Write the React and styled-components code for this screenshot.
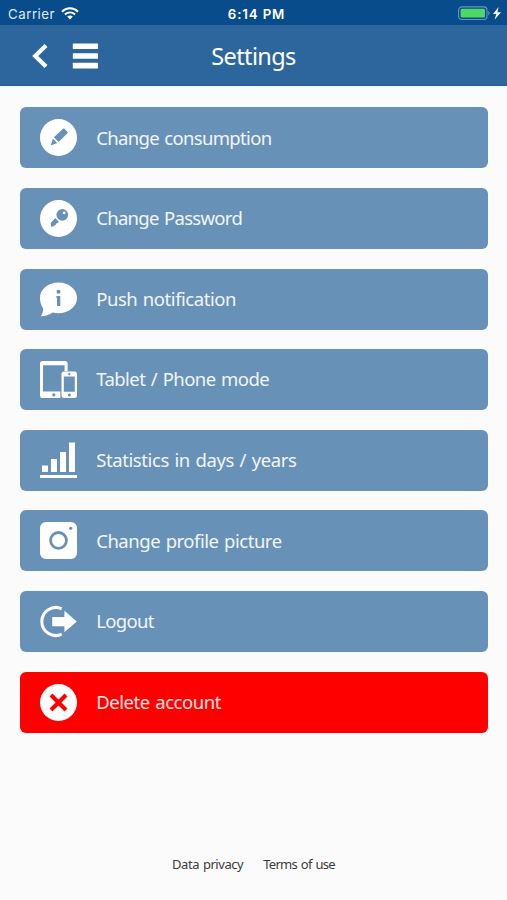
import styled, { createGlobalStyle } from "styled-components";

const GlobalStyle = createGlobalStyle`
  * {
    box-sizing: border-box;
  }
  body {
    margin: 0;
    background-color: #fbfbfb;
    font-family: "Noto Sans", "Open Sans", sans-serif;
  }
`;

const PageStyled = styled.div`
  display: flex;
  flex-direction: column;
  width: 100%;
  height: 900px;
  overflow: hidden;
`;

const StatusBarStyled = styled.div`
  display: grid;
  grid-template-columns: 1fr auto 1fr;
  align-items: center;
  height: 25px;
  padding: 2px 5px 0 8px;
  background-color: #084c8b;
  color: #fff;
  font-family: Inter, sans-serif;
  font-size: 13.3px;
`;

const CarrierStyled = styled.div`
  display: flex;
  align-items: center;
  gap: 6px;
  letter-spacing: 0.5px;
  color: #dfe9f2;
`;

const ClockStyled = styled.div`
  font-weight: 600;
  letter-spacing: 0.85px;
  padding-left: 3px;
`;

const BatteryStyled = styled.div`
  display: flex;
  justify-content: flex-end;
`;

const HeaderStyled = styled.header`
  display: grid;
  grid-template-columns: 1fr auto 1fr;
  align-items: center;
  height: 61px;
  padding-top: 2px;
  background-color: #2d669c;
  border-bottom: 1px solid #205d97;
  color: #fff;
`;

const NavStyled = styled.div`
  display: flex;
  align-items: center;
  gap: 24px;
  padding-left: 32px;
`;

const TitleStyled = styled.h1`
  margin: 0;
  font-size: 23.5px;
  font-weight: 400;
  line-height: 32px;
  letter-spacing: -0.62px;
`;

const MenuStyled = styled.main`
  display: flex;
  flex-direction: column;
  gap: 19.6px;
  padding: 21.4px 19.5px 0 20.3px;
`;

const MenuButtonStyled = styled.button`
  display: flex;
  align-items: center;
  gap: 19.2px;
  width: 100%;
  height: 61px;
  padding: 0 0 0 19.7px;
  border: none;
  border-radius: 6px;
  background-color: ${(props) => (props.$danger ? "#ff0000" : "#6891b8")};
  color: ${(props) => (props.$danger ? "#ffe3e3" : "#f1f6fa")};
  font-family: inherit;
  font-size: 18.5px;
  text-align: left;
  & > svg {
    flex: none;
  }
  & > span {
    padding-bottom: 1.6px;
    letter-spacing: ${(props) => props.$spacing}px;
    word-spacing: 1.2px;
    white-space: nowrap;
  }
`;

const FooterStyled = styled.footer`
  display: flex;
  justify-content: center;
  gap: 20px;
  margin-top: auto;
  padding-bottom: 26px;
  color: #3c3c3c;
  font-size: 13px;
  line-height: 20px;
  word-spacing: 1px;
`;

const LinkStyled = styled.a`
  letter-spacing: ${(props) => props.$spacing}px;
`;

const WifiIcon = () => (
  <svg width="18" height="13" viewBox="0 0 18 13" fill="none" stroke="#fff" strokeWidth="2">
    <path d="M1 4.8C5.6.2 12.4.2 17 4.8" />
    <path d="M3.9 7.6C6.9 4.8 11.1 4.8 14.1 7.6" />
    <path d="M9 12.4 6.2 9.6C7.8 8.2 10.2 8.2 11.8 9.6Z" fill="#fff" stroke="none" />
  </svg>
);

const BatteryIcon = () => (
  <svg width="44" height="16" viewBox="0 0 44 16">
    <rect x="0.6" y="0.9" width="28.4" height="12.6" rx="3.2" fill="none" stroke="#6b94ba" strokeWidth="1.1" />
    <rect x="2.6" y="2.8" width="24.4" height="8.8" rx="1.4" fill="#4cd964" />
    <path d="M30.3 5.1c1.8.6 1.8 3.6 0 4.2z" fill="#6b94ba" />
    <path d="M40.6 1 35 8h3.3L36.6 13.8 43 6.3h-3.6z" fill="#fff" />
  </svg>
);

const BackIcon = () => (
  <svg width="16" height="26" viewBox="0 0 16 26">
    <path d="M14 2.6 3.2 13 14 23.4" fill="none" stroke="#fff" strokeWidth="4.2" />
  </svg>
);

const BurgerIcon = () => (
  <svg width="26" height="26" viewBox="0 0 26 26" fill="#fff">
    <rect x="0.8" y="0.4" width="25.2" height="5.6" rx="0.5" />
    <rect x="0.8" y="10.2" width="25.2" height="5.6" rx="0.5" />
    <rect x="0.8" y="19.8" width="25.2" height="5.6" rx="0.5" />
  </svg>
);

const IconStyled = styled.svg.attrs({ width: 37, height: 37, viewBox: "0 0 37 37" })`
  fill: #fff;
`;

const PencilIcon = () => (
  <IconStyled>
    <circle cx="18.5" cy="18.5" r="18.5" />
    <g fill="#6891b8">
      <path d="M22.7 9.9C23.3 9.3 24.1 9.3 24.6 9.9L27.3 12.6C27.8 13.2 27.8 13.9 27.2 14.5L18.7 23.1 13.9 18.3Z" />
      <path d="M12.9 19.8 17.2 24.1 10.6 26.5Z" />
    </g>
  </IconStyled>
);

const KeyIcon = () => (
  <IconStyled>
    <circle cx="18.5" cy="18.5" r="18.5" />
    <circle cx="22.3" cy="14.8" r="5.9" fill="#6891b8" />
    <circle cx="24.2" cy="12.8" r="1.4" />
    <path d="M15.2 18.1 18.9 21.8 17 23.4 16 23.6 15.7 25 14.2 25.4 13.7 26.6H11L10.8 23Z" fill="#6891b8" />
  </IconStyled>
);

const InfoIcon = () => (
  <IconStyled>
    <path d="M18.5 1.6C28.7 1.6 37 8.4 37 17S28.7 32.2 18.5 32.2C16.6 32.2 14.6 31.9 12.8 31.4 9.4 33.8 5.2 35.2.8 35.2 2.4 32.8 3.3 30.5 3.2 27.5 1.2 24.8 0 21 0 17 0 8.4 8.3 1.6 18.5 1.6Z" />
    <circle cx="18.5" cy="10.8" r="2" fill="#6891b8" />
    <path d="M16.4 15H20.3V24.9H17V17H16.4Z" fill="#6891b8" />
  </IconStyled>
);

const DevicesIcon = () => (
  <IconStyled>
    <path
      fillRule="evenodd"
      d="M2.6 0H25C26.6 0 27.6 1 27.6 2.6V10H24.6V4.2H3V30.4H20.4V37H2.6C1 37 0 36 0 34.4V2.6C0 1 1 0 2.6 0ZM13.8 32.3a1.6 1.6 0 1 0 .01 0Z"
    />
    <path
      fillRule="evenodd"
      d="M24 10.4H34.6C36.1 10.4 37 11.3 37 12.8V34.6C37 36.1 36.1 37 34.6 37H24C22.5 37 21.5 36.1 21.5 34.6V12.8C21.5 11.3 22.5 10.4 24 10.4ZM23.8 15.4V30.8H34.8V15.4ZM29.3 11.8a1.2 1.2 0 1 0 .01 0ZM29.3 32.5a1.5 1.5 0 1 0 .01 0Z"
    />
  </IconStyled>
);

const StatsIcon = () => (
  <IconStyled>
    <rect x="2" y="23.5" width="6" height="6.5" />
    <rect x="11" y="17" width="6" height="13" />
    <rect x="20" y="10" width="6" height="20" />
    <rect x="29" y="0.5" width="6" height="29.5" />
    <rect x="0" y="33" width="37" height="3" />
  </IconStyled>
);

const CameraIcon = () => (
  <IconStyled>
    <rect width="37" height="37" rx="6" />
    <circle cx="18.5" cy="18.4" r="7.9" fill="none" stroke="#6891b8" strokeWidth="2.8" />
    <circle cx="30.7" cy="6.3" r="1.6" fill="#6891b8" />
  </IconStyled>
);

const LogoutIcon = () => (
  <IconStyled>
    <path d="M21.7 5.8A14 14 0 1 0 21.7 31.2" fill="none" stroke="#fff" strokeWidth="3" />
    <path d="M12.2 14H24.4V7.8L36.8 18.5 24.4 29.2V23.2H12.2Z" />
  </IconStyled>
);

const DeleteIcon = () => (
  <IconStyled>
    <circle cx="18.5" cy="18.5" r="18.5" />
    <path d="M11 11 26 26M26 11 11 26" stroke="#ff0000" strokeWidth="4.2" />
  </IconStyled>
);

const menuItems = [
  { label: "Change consumption", icon: PencilIcon, spacing: -0.67 },
  { label: "Change Password", icon: KeyIcon, spacing: -0.7 },
  { label: "Push notification", icon: InfoIcon, spacing: -0.45 },
  { label: "Tablet / Phone mode", icon: DevicesIcon, spacing: -0.54 },
  { label: "Statistics in days / years", icon: StatsIcon, spacing: -0.4 },
  { label: "Change profile picture", icon: CameraIcon, spacing: -0.47 },
  { label: "Logout", icon: LogoutIcon, spacing: -0.68 },
  { label: "Delete account", icon: DeleteIcon, spacing: -0.46, danger: true },
];

const App = () => {
  return (
    <PageStyled>
      <GlobalStyle />
      <StatusBarStyled>
        <CarrierStyled>
          <span>Carrier</span>
          <WifiIcon />
        </CarrierStyled>
        <ClockStyled>6:14 PM</ClockStyled>
        <BatteryStyled>
          <BatteryIcon />
        </BatteryStyled>
      </StatusBarStyled>
      <HeaderStyled>
        <NavStyled>
          <BackIcon />
          <BurgerIcon />
        </NavStyled>
        <TitleStyled>Settings</TitleStyled>
      </HeaderStyled>
      <MenuStyled>
        {menuItems.map(({ label, icon: Icon, spacing, danger }) => (
          <MenuButtonStyled key={label} $spacing={spacing} $danger={danger}>
            <Icon />
            <span>{label}</span>
          </MenuButtonStyled>
        ))}
      </MenuStyled>
      <FooterStyled>
        <LinkStyled $spacing={-0.46}>Data privacy</LinkStyled>
        <LinkStyled $spacing={-0.7}>Terms of use</LinkStyled>
      </FooterStyled>
    </PageStyled>
  );
};

export default App;
